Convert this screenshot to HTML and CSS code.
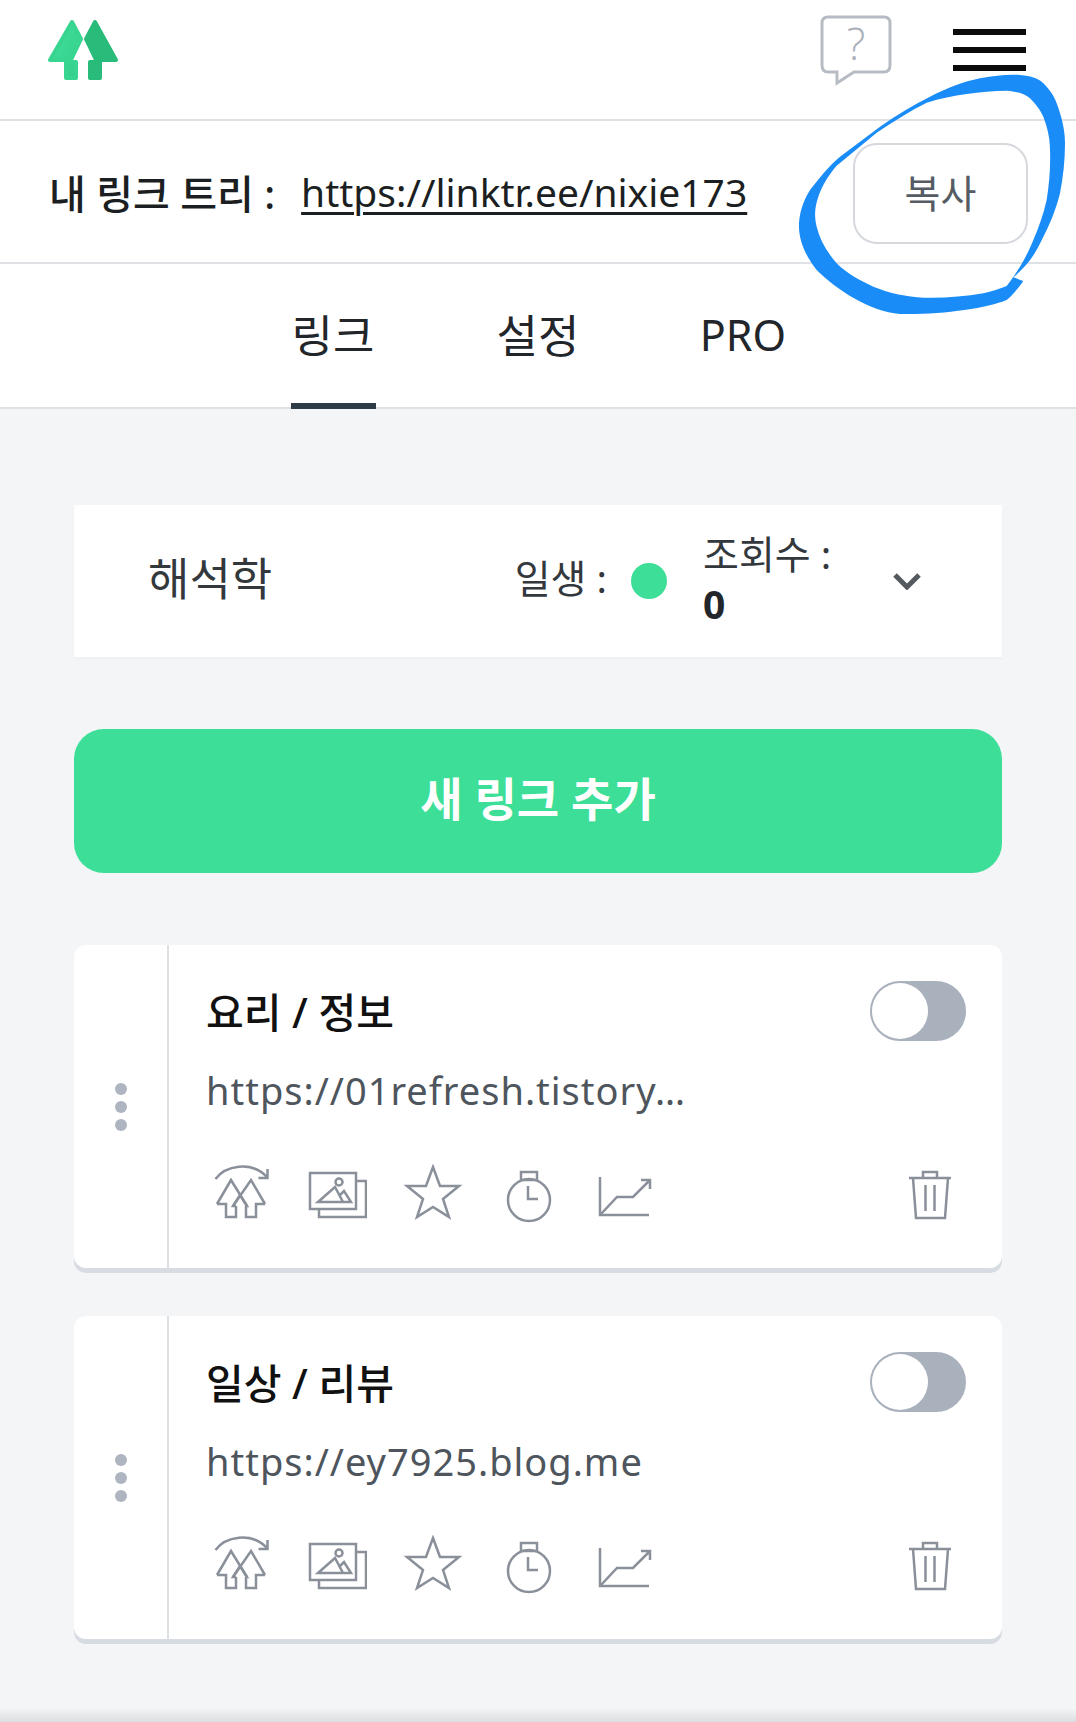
FILE: index.html
```html
<!DOCTYPE html>
<html lang="ko">
<head>
<meta charset="UTF-8" />
<meta name="viewport" content="width=device-width, initial-scale=1" />
<title>Linktree</title>
<link rel="stylesheet" href="styles.css">
</head>
<body>

<svg class="sprites" width="0" height="0" aria-hidden="true">
  <defs>
    <linearGradient id="leafLeft" x1="0" y1="0" x2="1" y2="1">
      <stop offset="0" stop-color="#3fe29c" />
      <stop offset="1" stop-color="#35cc8b" />
    </linearGradient>
    <symbol id="iconTree" viewBox="0 0 60 60">
      <path d="M4.5 15C14 2 40 -4 56 13M56.500 5V14H47.500" />
      <path d="M6 40L20 16L36 42M6 40H15V53H25V42" />
      <path d="M54 40L40 16L22 42M54 40H45V53H35V42" />
      <path d="M25 42L22 42L29 31L36 42H35" />
    </symbol>
    <symbol id="iconImage" viewBox="0 0 60 60">
      <rect x="3" y="9" width="46" height="36" />
      <path d="M49 17H59V53H12V45" />
      <path d="M11 38L28 23L36 38ZM33 31L37 27L44 38H36" />
      <circle cx="32" cy="18" r="3.500" />
    </symbol>
    <symbol id="iconStar" viewBox="0 0 60 60">
      <path d="M30 3L37 22H56L40 35L46 53L30 43L14 53L20 35L4 22H23Z" />
    </symbol>
    <symbol id="iconTimer" viewBox="0 0 60 60">
      <circle cx="30" cy="36" r="21" />
      <rect x="22" y="8" width="16" height="8" />
      <path d="M29 22V35H39" />
    </symbol>
    <symbol id="iconChart" viewBox="0 0 60 60">
      <path d="M5 13V51H54" />
      <path d="M6 50L22 33H38L55 16M46 16H55V25" />
    </symbol>
    <symbol id="iconTrash" viewBox="0 0 60 60">
      <path d="M9 14H51M13 14L16 54H45L48 14M23 14V8H37V14M25.500 21V47M34.500 21V47" />
    </symbol>
  </defs>
</svg>

<header class="topbar">
  <svg class="logo" width="85" height="75" viewBox="40 10 85 75" aria-label="Linktree">
    <path class="leaf-left" d="M72 22L81 39L70 62H76V78H66V60H50Z" />
    <path class="leaf-right" d="M95 22L86 39L97 62H90V78H100V60H116Z" />
  </svg>
  <div class="topbar-actions">
    <svg class="help" width="72" height="70" viewBox="0 0 72 70" aria-label="Help">
      <path d="M8 2H64Q70 2 70 8V50Q70 57 64 57H34L17 68V57H8Q2 57 2 50V8Q2 2 8 2Z" />
      <text x="36" y="45" text-anchor="middle">?</text>
    </svg>
    <div class="burger"><span></span><span></span><span></span></div>
  </div>
</header>

<section class="myurl">
  <span class="myurl-label">내 링크 트리 :</span>
  <a class="myurl-link" href="#">https://linktr.ee/nixie173</a>
  <button class="copy-btn" type="button">복사</button>
</section>

<nav class="tabs">
  <a class="tab tab-active" href="#">링크</a>
  <a class="tab" href="#">설정</a>
  <a class="tab tab-latin" href="#">PRO</a>
</nav>

<main class="content">
  <div class="panel">
    <div class="panel-name">해석학</div>
    <div class="panel-status">일생 :</div>
    <span class="live-dot"></span>
    <div class="panel-views">조회수 :<strong>0</strong></div>
    <svg class="chevron" width="30" height="18" viewBox="0 0 30 18"><path d="M3 3L15 15L27 3" /></svg>
  </div>

  <button class="add-btn" type="button">새 링크 추가</button>

  <article class="card">
    <div class="card-handle"><span></span><span></span><span></span></div>
    <div class="card-body">
      <div class="card-head">
        <h2>요리 / 정보</h2>
        <span class="toggle"></span>
      </div>
      <div class="card-url">https://01refresh.tistory…</div>
      <div class="card-icons">
        <svg class="ico"><use href="#iconTree" /></svg>
        <svg class="ico"><use href="#iconImage" /></svg>
        <svg class="ico"><use href="#iconStar" /></svg>
        <svg class="ico"><use href="#iconTimer" /></svg>
        <svg class="ico"><use href="#iconChart" /></svg>
        <svg class="ico ico-trash"><use href="#iconTrash" /></svg>
      </div>
    </div>
  </article>

  <article class="card">
    <div class="card-handle"><span></span><span></span><span></span></div>
    <div class="card-body">
      <div class="card-head">
        <h2>일상 / 리뷰</h2>
        <span class="toggle"></span>
      </div>
      <div class="card-url">https://ey7925.blog.me</div>
      <div class="card-icons">
        <svg class="ico"><use href="#iconTree" /></svg>
        <svg class="ico"><use href="#iconImage" /></svg>
        <svg class="ico"><use href="#iconStar" /></svg>
        <svg class="ico"><use href="#iconTimer" /></svg>
        <svg class="ico"><use href="#iconChart" /></svg>
        <svg class="ico ico-trash"><use href="#iconTrash" /></svg>
      </div>
    </div>
  </article>
</main>

<!-- hand drawn circle on top of the screenshot -->
<svg class="scribble" width="296" height="330" viewBox="0 0 888 990" aria-hidden="true">
  <path d="M730 843C710 870 695 890 680 900C620 925 480 945 360 942C270 935 170 870 110 810C75 765 55 720 57 670C60 625 75 595 90 570C120 530 150 495 180 470C220 440 260 410 300 380C350 345 400 315 450 290C500 265 550 245 600 235C650 225 690 222 720 225C755 228 775 235 790 250C815 275 825 295 830 310C845 350 855 390 855 430C855 480 850 530 840 580C830 620 815 660 800 690C785 720 770 755 750 780C735 800 715 820 700 832C710 835 720 840 730 843ZM680 858C660 865 635 875 610 880C550 890 490 895 430 893C380 890 330 880 280 860C240 842 200 820 170 790C140 755 120 720 110 680C103 650 103 625 115 590C125 560 145 525 170 497C210 465 250 430 290 398C340 365 390 332 440 308C480 295 520 288 560 282C600 276 640 272 680 272C715 275 735 282 750 295C770 315 780 330 790 350C803 385 810 415 810 450C812 500 808 550 800 600C790 645 775 685 760 720C748 750 735 775 720 800C707 820 695 840 680 858Z" />
</svg>

</body>
</html>
```

FILE: styles.css
```css
* { box-sizing: border-box; }
html, body { margin: 0; padding: 0; }
body {
  position: relative;
  width: 1076px;
  height: 1722px;
  overflow: hidden;
  font-family: "Noto Sans", "Noto Sans CJK KR", sans-serif;
  color: #22262b;
  background: linear-gradient(to bottom, #f4f5f7 1708px, #dcdde0 1722px);
}
a { color: inherit; text-decoration: none; }
button { font-family: inherit; }
.sprites { position: absolute; }

.topbar { height: 121px; padding: 0 50px 0 40px; display: flex; align-items: flex-start; justify-content: space-between; background: #fff; border-bottom: 2px solid #dfe1e5; }
.logo { margin-top: 10px; }
.leaf-left, .leaf-right { stroke-width: 4; stroke-linejoin: round; }
.leaf-left { fill: url(#leafLeft); stroke: #38d590; }
.leaf-right { fill: #29bb7a; stroke: #29bb7a; }
.topbar-actions { display: flex; align-items: flex-start; gap: 61px; }
.help { margin-top: 15px; overflow: visible; }
.help path { fill: none; stroke: #b7bcc4; stroke-width: 3; }
.help text { font-family: "Open Sans", sans-serif; font-weight: 300; font-size: 44px; fill: #a9afb8; }
.burger { margin-top: 29px; width: 73px; display: flex; flex-direction: column; gap: 12px; }
.burger span { display: block; height: 6px; background: #0b0b0b; }

.myurl { height: 143px; padding: 0 48px 0 49px; display: flex; align-items: center; background: #fff; border-bottom: 2px solid #dfe1e5; }
.myurl-label { font-size: 40px; font-weight: 500; color: #1c1f22; }
.myurl-link { margin-left: 26px; font-size: 39px; color: #1c1f22; text-decoration: underline; text-decoration-thickness: 3px; text-underline-offset: 5px; }
.copy-btn { margin-left: auto; margin-top: 3px; padding: 0 0 5px; width: 175px; height: 101px; font-size: 39px; color: #555c63; background: #fff; border: 2px solid #d5d8dc; border-radius: 24px; }

.tabs { height: 145px; display: flex; justify-content: center; gap: 120px; background: #fff; border-bottom: 2px solid #dfe1e5; }
.tab { width: 85px; height: 145px; margin-bottom: -2px; padding-bottom: 6px; display: flex; align-items: center; justify-content: center; white-space: nowrap; font-size: 45px; color: #22262b; }
.tab-active { border-bottom: 6px solid #2f3b45; padding-bottom: 0; }
.tab-latin { font-size: 43px; padding-bottom: 4px; }

.content { padding: 96px 74px 0; }

.panel { height: 152px; display: flex; align-items: center; background: #fff; box-shadow: 0 2px 2px #eef0f2; }
.panel-name { flex: 1; padding: 0 0 10px 74px; font-size: 45px; color: #33383d; }
.panel-status { padding-bottom: 10px; font-size: 39px; color: #33383d; }
.live-dot { width: 36px; height: 36px; margin-left: 24px; border-radius: 50%; background: #3ddf98; }
.panel-views { width: 189px; margin-left: 36px; padding-bottom: 4px; font-size: 39px; line-height: 50px; color: #33383d; }
.panel-views strong { display: block; font-weight: 700; color: #22262b; }
.chevron { margin-right: 80px; }
.chevron path { fill: none; stroke: #555a5f; stroke-width: 5; }

.add-btn { display: block; width: 100%; height: 144px; margin-top: 72px; padding-bottom: 12px; font-size: 46px; font-weight: 700; color: #fff; background: #3ddf98; border: 0; border-radius: 30px; }

.card { height: 323px; margin-top: 48px; display: flex; background: #fff; border-radius: 12px; box-shadow: 0 5px 0 #d7dce2; }
.add-btn + .card { margin-top: 72px; }
.card-handle { width: 95px; flex: none; display: flex; flex-direction: column; align-items: center; justify-content: center; gap: 6px; border-right: 2px solid #dde0e4; }
.card-handle span { width: 12px; height: 12px; border-radius: 50%; background: #aeb5c0; }
.card-body { flex: 1; padding: 36px 36px 0 37px; }
.card-head { display: flex; align-items: center; justify-content: space-between; height: 60px; }
.card-head h2 { margin: 0 0 2px; font-size: 41px; font-weight: 500; color: #111; }
.toggle { position: relative; width: 96px; height: 60px; border: 2px solid #a9b1bd; border-radius: 30px; background: #a9b1bd; }
.toggle::after { content: ""; position: absolute; left: 0; top: 0; width: 56px; height: 56px; border-radius: 50%; background: #fff; }
.card-url { margin-top: 26px; font-size: 38px; line-height: 46px; letter-spacing: 1px; color: #4e555c; }
.card-icons { display: flex; margin: 51px 0 0 -13px; padding-right: 6px; }
.ico { width: 60px; height: 60px; margin: 0 18px; flex: none; fill: none; stroke: #8a9099; stroke-width: 2.500; }
.ico-trash { margin: 0 0 0 auto; }

.scribble { position: absolute; left: 780px; top: 0; }
.scribble path { fill: #1a8cf7; fill-rule: evenodd; }
```
